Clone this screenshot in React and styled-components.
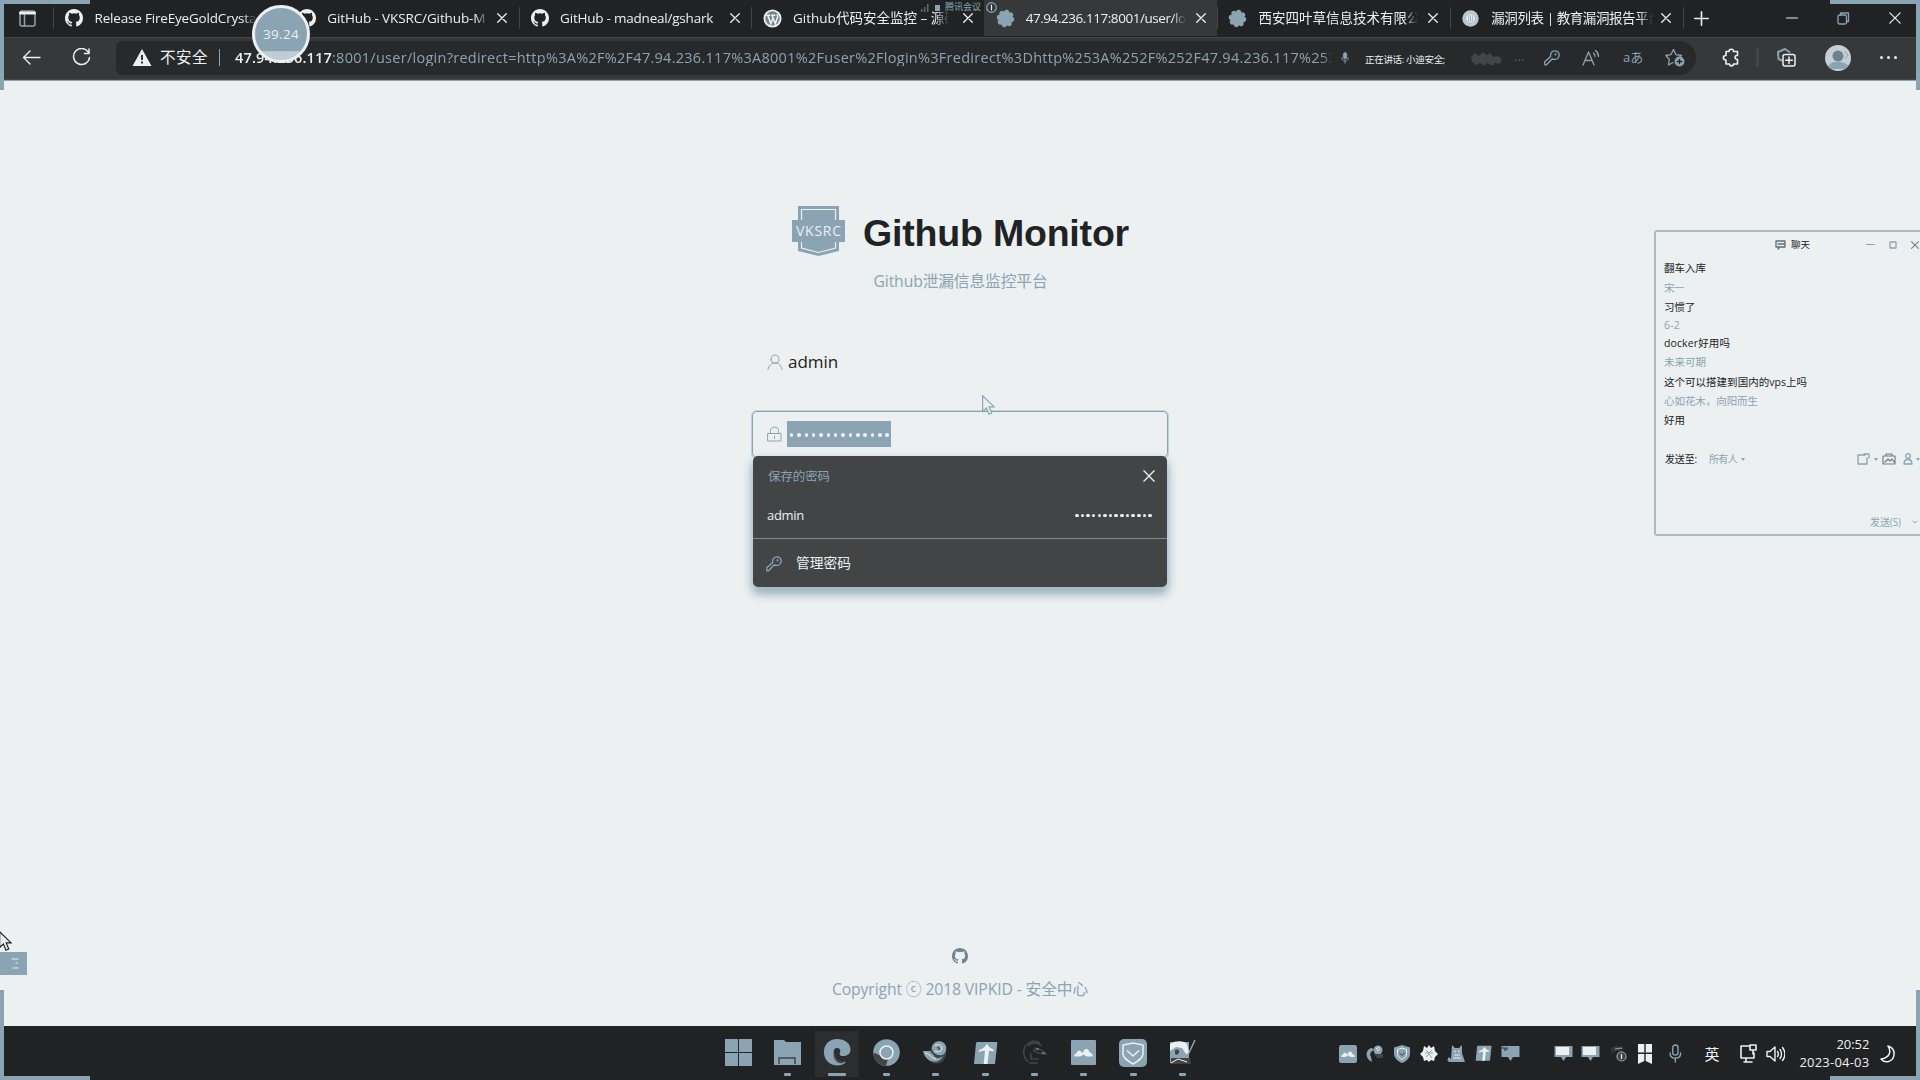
import React, { useLayoutEffect, useRef, useState } from 'react';
import styled, { createGlobalStyle, css } from 'styled-components';

const c = { light: '#ecf0f1', blue: '#8aa4b3', gray: '#424445', dark: '#202224' };

const Global = createGlobalStyle`
  * { box-sizing: border-box; }
  body { margin: 0; overflow: hidden; background: ${c.light}; }
  svg { display: block; flex: none; }
`;

const Screen = styled.div`
  position: relative;
  width: 1920px;
  height: 1080px;
  overflow: hidden;
  display: grid;
  grid-template-rows: 37px 43px 1fr 54px;
  background: ${c.light};
  color: ${c.light};
  font-family: 'Open Sans', 'Noto Sans CJK SC', sans-serif;
  font-size: 14px;
`;

/* ---------- text fitted to a column width ---------- */
const Line = styled.span`
  display: inline-block;
  flex: none;
  white-space: pre;
  width: ${p => p.$w}px;
  font-size: ${p => p.$size || 14}px;
  font-weight: ${p => p.$weight || 400};
  color: ${p => p.$color || c.light};
  line-height: ${p => p.$lh || 1.2};
`;
function Fit({ children, w, size, weight, color, lh, className }) {
  const ref = useRef(null);
  const [gap, setGap] = useState(0);
  useLayoutEffect(() => {
    const n = ref.current.textContent.length;
    setGap((w - ref.current.getBoundingClientRect().width) / n);
  }, [w]);
  return (
    <Line $w={w} $size={size} $weight={weight} $color={color} $lh={lh} className={className}>
      <span ref={ref} style={{ letterSpacing: gap + 'px' }}>{children}</span>
    </Line>
  );
}

/* ---------- tab strip ---------- */
const TabStrip = styled.header`
  display: flex;
  align-items: stretch;
  background: ${c.dark};
  padding-bottom: 1px;
`;
const TabMenu = styled.div`
  width: 53px;
  flex: none;
  display: flex;
  align-items: center;
  padding-left: 19px;
`;
const Tab = styled.div`
  width: 232.8px;
  flex: none;
  display: flex;
  align-items: center;
  padding-left: 11px;
  background: ${p => (p.$active ? '#36383a' : 'transparent')};
  &::before {
    content: '';
    flex: none;
    align-self: center;
    height: 22px;
    width: 1px;
    margin: 0 0 0 -11px;
    background: ${p => (p.$active ? 'transparent' : c.gray)};
  }
`;
const TabIcon = styled.div`
  margin-left: 10px;
  width: 20px;
  flex: none;
  display: flex;
  justify-content: center;
`;
const TabTitle = styled.div`
  margin-left: 10.5px;
  width: 170px;
  flex: none;
  overflow: hidden;
  display: flex;
  mask-image: linear-gradient(90deg, #000 ${p => p.$fade}px, transparent ${p => p.$fade + 14}px);
`;
const TabEnd = styled.div`
  width: 1px;
  height: 22px;
  align-self: center;
  background: ${c.gray};
`;
const WinButtons = styled.div`
  margin-left: auto;
  display: flex;
  align-items: center;
  gap: 39px;
  padding-right: 19px;
`;
const NewTab = styled.div`
  display: flex;
  align-items: center;
  padding-left: 10px;
`;

/* ---------- toolbar ---------- */
const Toolbar = styled.div`
  display: flex;
  align-items: center;
  background: #363839;
  border-top: 1px solid ${c.gray};
  border-bottom: 1px solid ${c.gray};
  padding-bottom: 2px;
`;
const NavButtons = styled.div`
  width: 116px;
  display: flex;
  align-items: center;
  gap: 31px;
  padding-left: 22px;
`;
const Address = styled.div`
  width: 1580px;
  height: 34px;
  border-radius: 6px 17px 17px 6px;
  background: #27292b;
  display: flex;
  align-items: center;
  padding-left: 16px;
`;
const Divider = styled.i`
  width: 1px;
  height: 17px;
  margin: 0 15px 0 11px;
  background: ${c.blue};
`;
const Url = styled.div`
  display: flex;
  width: 1096px;
  overflow: hidden;
  mask-image: linear-gradient(90deg, #000 1088px, transparent 1098px);
`;
const AddressTools = styled.div`
  display: flex;
  align-items: center;
  padding-left: 10px;
`;
const Speaking = styled.div`
  margin-left: 16px;
  width: 104px;
`;
const ToolGroup = styled.div`
  display: flex;
  align-items: center;
  margin-left: ${p => p.$ml || 0}px;
  gap: ${p => p.$gap || 0}px;
`;
const Avatar = styled.div`
  width: 26px;
  height: 26px;
  border-radius: 50%;
  background: #c4d0d7;
  display: grid;
  place-items: center;
  overflow: hidden;
`;

/* ---------- login page ---------- */
const Page = styled.main`
  display: flex;
  flex-direction: column;
  align-items: center;
  border-top: 1px solid ${c.blue};
`;
const Brand = styled.div`
  display: flex;
  align-items: center;
  height: 52px;
  margin: 124px 0 0 1px;
  gap: 18px;
`;
const Heading = styled.h1`
  margin: 4px 0 0;
  display: flex;
  font-family: 'Liberation Sans', sans-serif;
`;
const Subtitle = styled.div`
  height: 24px;
  margin: 12px 0 0 1px;
  display: flex;
  align-items: center;
`;
const Form = styled.form`
  width: 416px;
  margin: 46px 0 0;
`;
const Field = styled.div`
  height: 47px;
  display: flex;
  align-items: center;
  gap: 5px;
  padding: 0 0 1px 15px;
  border-radius: 5px;
  ${p => p.$focus && css`
    border: 1px solid ${c.blue};
    box-shadow: 0 0 0 1px #c4d0d7;
    padding-left: 14px;
  `}
`;
const Gap = styled.div`height: 25px;`;
const Selected = styled.div`
  width: 104px;
  height: 26px;
  padding: 2px 0 0 1px;
  display: flex;
  align-items: center;
  justify-content: space-around;
  background: ${c.blue};
`;
const Dot = styled.i`
  width: ${p => p.$s}px;
  height: ${p => p.$s}px;
  border-radius: 50%;
  background: ${c.light};
`;
const Popup = styled.section`
  height: 131px;
  margin: -2px 0 0 1px;
  width: 414px;
  border-radius: 5px;
  background: ${c.gray};
  box-shadow: 0 7px 8px #a3b8c4, 0 4px 12px #b2c3cc;
  position: relative;
`;
const PopHead = styled.div`
  height: 40px;
  padding: 0 12px 0 15px;
  display: flex;
  align-items: center;
  justify-content: space-between;
`;
const PopRow = styled(PopHead)`
  height: 43px;
  padding: 0 15px 3px 14px;
  border-bottom: 1px solid #778b97;
`;
const PopManage = styled(PopHead)`
  height: 48px;
  padding: 1px 12px 0 13px;
  justify-content: flex-start;
  gap: 14px;
`;
const SmallDots = styled.div`
  width: 77px;
  display: flex;
  justify-content: space-between;
`;
const Footer = styled.footer`
  margin-top: auto;
  height: 78px;
  display: flex;
  flex-direction: column;
  align-items: center;
  gap: 16px;
`;

/* ---------- taskbar ---------- */
const Taskbar = styled.footer`
  display: flex;
  align-items: center;
  background: ${c.dark};
  padding: 1px 0 0 713.5px;
`;
const TaskApp = styled.div`
  width: 49.4px;
  height: 46px;
  display: grid;
  grid-template-rows: 44px 3px;
  justify-items: center;
  align-items: center;
  &::after {
    content: '';
    width: ${p => (p.$active ? 18 : p.$run ? 7 : 0)}px;
    height: 3px;
    margin-top: -3px;
    border-radius: 1px;
    background: ${c.blue};
  }
  ${p => p.$active && css`background: linear-gradient(#2b2d2f, #2b2d2f) center / 44px 46px no-repeat;`}
`;
const Tray = styled.div`
  margin-left: 128px;
  display: flex;
  align-items: center;
`;
const TrayCell = styled.div`
  width: ${p => p.$w}px;
  padding-right: ${p => p.$after || 0}px;
  display: flex;
  justify-content: center;
`;
const Clock = styled.div`
  display: flex;
  flex-direction: column;
  align-items: flex-end;
  width: 85px;
`;

/* ---------- overlays ---------- */
const Corner = styled.div`
  position: absolute;
  width: 90px;
  height: 90px;
  pointer-events: none;
  border: 0 solid ${c.blue};
  ${p => p.$v}: 0;
  ${p => p.$h}: 0;
  border-${p => p.$v}-width: 4px;
  border-${p => p.$h}-width: 4px;
`;
const Timer = styled.div`
  position: absolute;
  left: 252px;
  top: 5px;
  width: 58px;
  height: 58px;
  border-radius: 50%;
  border: 3px solid ${c.light};
  background: linear-gradient(${c.blue} 82%, #c0cdd4 84%);
  display: grid;
  place-items: center;
`;
const Meeting = styled.div`
  position: absolute;
  left: 921px;
  top: 0;
  height: 15px;
  display: flex;
  align-items: center;
`;
const Pointer = styled.div`
  position: absolute;
  left: ${p => p.$x}px;
  top: ${p => p.$y}px;
`;
const SideBadge = styled.div`
  position: absolute;
  left: 0;
  top: 952px;
  width: 27px;
  height: 23px;
  background: ${c.blue};
  display: grid;
  place-items: center end;
  padding-right: 8px;
`;
const Chat = styled.aside`
  position: absolute;
  left: 1654px;
  top: 230px;
  width: 270px;
  height: 306px;
  border: 2px solid #a9bcc7;
  border-radius: 3px;
  background: ${c.light};
  display: flex;
  flex-direction: column;
`;
const ChatTitle = styled.div`
  height: 26px;
  display: flex;
  align-items: center;
  padding-left: 119px;
  gap: 5px;
`;
const ChatControls = styled.div`
  display: flex;
  align-items: center;
  gap: 14px;
  margin-left: 51px;
`;
const Messages = styled.div`
  padding-left: 8px;
  height: 194px;
`;
const Msg = styled.div`
  height: ${p => p.$h}px;
  display: flex;
  align-items: center;
`;
const SendTo = styled.div`
  display: flex;
  align-items: center;
  height: 30px;
  padding-left: 9px;
`;
const ChatIcons = styled.div`
  display: flex;
  align-items: center;
  gap: 4px;
  margin-left: 112px;
`;
const Send = styled.div`
  margin-top: 37px;
  padding-left: 214px;
  display: flex;
  align-items: center;
  height: 24px;
  gap: 11px;
`;

/* ---------- icons ---------- */
const I = ({ w, h, vb, s = 1.3, col = c.light, fill = 'none', children }) => (
  <svg width={w} height={h || w} viewBox={vb || `0 0 ${w} ${h || w}`} fill={fill}
    stroke={fill === 'none' ? col : 'none'} strokeWidth={s} strokeLinecap="round" strokeLinejoin="round">{children}</svg>
);
const Octocat = ({ s = 18, col = c.light }) => (
  <svg width={s} height={s} viewBox="0 0 16 16" fill={col}>
    <path d="M8 0C3.58 0 0 3.58 0 8c0 3.54 2.29 6.53 5.47 7.59.4.07.55-.17.55-.38 0-.19-.01-.82-.01-1.49-2.01.37-2.53-.49-2.69-.94-.09-.23-.48-.94-.82-1.13-.28-.15-.68-.52-.01-.53.63-.01 1.08.58 1.23.82.72 1.21 1.87.87 2.33.66.07-.52.28-.87.51-1.07-1.78-.2-3.64-.89-3.64-3.95 0-.87.31-1.59.82-2.15-.08-.2-.36-1.02.08-2.12 0 0 .67-.21 2.2.82a7.6 7.6 0 0 1 4 0c1.53-1.04 2.2-.82 2.2-.82.44 1.1.16 1.92.08 2.12.51.56.82 1.27.82 2.15 0 3.07-1.87 3.75-3.65 3.95.29.25.54.73.54 1.48 0 1.07-.01 1.93-.01 2.2 0 .21.15.46.55.38A8 8 0 0 0 16 8c0-4.42-3.58-8-8-8z" />
  </svg>
);
const Cross = ({ s = 9, col = c.light, w = 1.3 }) => <I w={s} vb="0 0 10 10" s={w} col={col}><path d="M.7.7 9.3 9.3M9.3.7.7 9.3" /></I>;
const WordPress = () => (
  <svg width="19" height="19" viewBox="0 0 20 20">
    <circle cx="10" cy="10" r="9.5" fill={c.light} />
    <circle cx="10" cy="10" r="7.6" fill="#71858f" />
    <path d="M3.5 6.5h4M8.5 6.5h4.5M5 6.5l3.3 9 2.2-6.3M9.5 6.5l3.4 9L15.5 8c.3-1-.8-1.8-.8-2.6" fill="none" stroke={c.light} strokeWidth="1.6" />
  </svg>
);
const Scallop = () => (
  <svg width="19" height="19" viewBox="0 0 20 20" fill={c.blue}>
    <circle cx="10" cy="10" r="7.6" />
    {[0, 45, 90, 135, 180, 225, 270, 315].map(a => <circle key={a} cx="10" cy="3.4" r="2.7" transform={`rotate(${a + 10} 10 10)`} />)}
  </svg>
);
const Seal = () => (
  <svg width="17" height="17" viewBox="0 0 18 18">
    <circle cx="9" cy="9" r="8.7" fill="#b9c9d2" />
    <circle cx="9" cy="9" r="5" fill={c.light} stroke={c.blue} strokeDasharray="1 1" />
    <path d="M7 5.5v7M9 5v8M11 5.5v7" stroke={c.blue} strokeWidth=".8" />
  </svg>
);
const KeyIcon = ({ s = 16, col = c.blue }) => <I w={s} vb="0 0 16 16" s={1.3} col={col}><path d="M8 9 2.600 14.800H.8v-3L6.600 6.500C6 3.300 8 .8 10.800.8c2.600 0 4.400 1.900 4.400 4.300 0 2.700-2.200 4.600-4.700 4.300z" /><circle cx="11.500" cy="4.400" r=".4" /></I>;
const Shield = ({ s }) => (
  <svg width={s} height={s} viewBox="0 0 18 18">
    <path d="M9 0l8 2.500v6c0 4-3 7.500-8 9.500C4 16 1 12.500 1 8.500v-6z" fill={c.blue} />
    <path d="M9 3l4.500 1.500v4c0 2.500-1.800 4.500-4.500 6-2.700-1.500-4.500-3.500-4.500-6v-4z" fill="none" stroke={c.light} />
    <path d="M6.500 8 9 10.500 11.500 7.500" fill="none" stroke={c.gray} />
  </svg>
);
const Mountain = ({ s }) => (
  <svg width={s} height={s} viewBox="0 0 24 24">
    <rect width="24" height="24" rx={s < 20 ? 3 : 1} fill={c.blue} />
    <path d="M3 15.500c0-1.500.8-2.500 2-2.500.6-1.700 1.700-3 2.700-3 1.300 0 2.300 1.300 3.300 2.800.8-2.200 2.200-4.100 3.700-4.100 1.800 0 3 1.800 3.300 3.600 1.800.2 3 1.400 3 3.200-2 .6-5 .6-7-.2l-2-1.500-2.500 1.700c-2 .6-4.500.6-6.500 0z" fill={c.light} />
  </svg>
);
const Arrow = ({ s }) => (
  <svg width={s} height={s * 0.96} viewBox="0 0 25 24">
    <path d="M4 1h19c1 0 1.500.5 1.300 1.500L22 23H1L3 2z" fill={c.blue} />
    <path d="M14 2.500c1 2.500 3 4.500 6.500 6v2c-1.500-.5-3-.7-4.500-.7L14.500 23h-3.800L12 9.800c-2 0-4 .3-6 1.200V9c3.500-1 6.500-3 8-6.500z" fill={c.light} />
  </svg>
);
const Screenlet = ({ col, inner }) => (
  <svg width="19" height="17" viewBox="0 0 19 17">
    <path d="M.5 1h18v11H12l-2.500 4L7 12H.5z" fill={c.blue} />
    <rect x="2" y="2" width="13" height="8" fill={col} />
    {inner && <path d="M1 3h3v3M6 2v3" stroke={c.dark} fill="none" />}
  </svg>
);
const Mic = ({ s = 18, col = c.blue }) => <I w={s * 0.67} h={s} vb="0 0 12 18" s={1.3} col={col}><rect x="3.500" y="1" width="5" height="9.500" rx="2.500" fill={s < 15 ? col : 'none'} /><path d="M1 8.500c0 3 2 5 5 5s5-2 5-5M6 13.500V17" /></I>;
const Cursor = ({ col, w = 13 }) => <svg width={w} height={w * 1.6} viewBox="0 0 13 21"><path d="M.6.8v15.800l3.800-3.500 2.600 6.300 2.800-1.200L7.200 12h5z" fill={c.light} stroke={col} strokeWidth="1.200" /></svg>;

const TABS = [
  { icon: <Octocat />, text: 'Release FireEyeGoldCrystal', w: 165, fade: 148 },
  { icon: <Octocat />, text: 'GitHub - VKSRC/Github-M', w: 158, fade: 148, close: true },
  { icon: <Octocat />, text: 'GitHub - madneal/gshark', w: 153, fade: 160, close: true },
  { icon: <WordPress />, text: 'Github代码安全监控 – 源码', w: 165, fade: 142, close: true },
  { icon: <Scallop />, text: '47.94.236.117:8001/user/lo', w: 160, fade: 146, close: true, active: true },
  { icon: <Scallop />, text: '西安四叶草信息技术有限公', w: 162, fade: 146, close: true },
  { icon: <Seal />, text: '漏洞列表 | 教育漏洞报告平台', w: 170, fade: 148, close: true },
];

const MESSAGES = [
  ['翻车入库', 42, 22, 1], ['宋一', 20, 18, 0], ['习惯了', 31, 20, 1], ['6-2', 16, 17, 0],
  ['docker好用吗', 66, 18, 1], ['未来可期', 42, 21, 0], ['这个可以搭建到国内的vps上吗', 143, 19, 1],
  ['心如花木，向阳而生', 94, 19, 0], ['好用', 21, 19, 1],
];

const APPS = [
  <svg key="w" width="27" height="27" viewBox="0 0 27 27" fill={c.blue}><path d="M0 0h13v13H0zM14 0h13v13H14zM0 14h13v13H0zM14 14h13v13H14z" /></svg>,
  <svg key="f" width="27" height="25" viewBox="0 0 27 25"><path d="M0 0h10l2 2h15v23H0z" fill={c.blue} /><path d="M5 24v-6h16v6" fill="none" stroke={c.gray} strokeWidth="1.500" /></svg>,
  <svg key="e" width="28" height="27" viewBox="0 0 28 27"><path d="M1 15C0 6 6 0 14 0c8 0 14 5 13.500 11-.3 4-3.500 6-7.500 6-3 0-4-1.500-3-3.500 1-2.500-.5-4.500-3-4.500-4 0-4 6-2 9.500 2 3.500 6 5 11 4.500C18.500 29 3 28 1 15z" fill={c.blue} /><path d="M12 14c0 5 4 9 10 8.500-3 3-8 2-10-2s-2-5 0-6.500z" fill={c.gray} /></svg>,
  <svg key="c" width="27" height="27" viewBox="0 0 27 27"><circle cx="13.500" cy="13.500" r="13.300" fill={c.blue} /><path d="M2 14l6 3 7 3-2 6.800C6 26.500 1 21 0 15z" fill={c.gray} /><circle cx="13.500" cy="13.500" r="6.500" fill={c.blue} stroke={c.light} strokeWidth="1.500" /></svg>,
  <svg key="b" width="25" height="24" viewBox="0 0 25 24"><path d="M0 10h7c2-7 8-10 13-7 5 3 4 14-1 18-6 4-15 1-19-11z" fill={c.gray} /><path d="M0 10h7l5 6c2 2 6 1 8-1-2 5-7 7-12 5S1 14 0 10zM9 5c2-5 8-6 12-3 4 4 2 11-2 12-5 1-11-2-10-9z" fill={c.blue} /><path d="M12 5c3-3 7-1 7 2s-4 5-7 3M2 12c4 0 6 5 11 6" fill="none" stroke={c.light} /><path d="M14 7c2-1 3 0 2 2" fill="none" stroke={c.dark} /></svg>,
  <Arrow key="a" s={25} />,
  <svg key="k" width="25" height="26" viewBox="0 0 25 26" fill="none" stroke={c.gray} strokeWidth="1.500"><path d="M18 3C11-1 3 3 2 10c-1 5 1 9 4 12M6 6c3-4 9-4 14 0M12 8l7 2 5 4-8-1-5-3M8 19h9M7 23h9M10 13c-2 2-2 3 0 5" /><path d="M14 9h3M20 13h3" stroke={c.blue} strokeWidth="1" /></svg>,
  <Mountain key="m" s={25} />,
  <svg key="s" width="28" height="28" viewBox="0 0 28 28"><rect width="28" height="28" rx="5" fill={c.blue} /><path d="M14 4l10 2v9c0 4-5 7-10 10C9 22 4 19 4 15V6z" fill="none" stroke={c.light} strokeWidth="1.500" /><path d="M8 11.500l6 5.500 6-5.500" fill="none" stroke={c.light} strokeWidth="1.500" /></svg>,
  <svg key="n" width="26" height="25" viewBox="0 0 26 25"><path d="M0 2h19v21H0z" fill={c.blue} /><path d="M0 4c7-4 14-3 17 0l2 9-3 1-4-6-6-1-6 4z" fill={c.light} /><path d="M1 18h19l1 6H1zM5 10c4-2 6 2 2 5l-2-1" fill={c.gray} /><path d="M1 23l7-4 9 3" stroke={c.light} fill="none" /><path d="M25 0l-8 17" stroke={c.blue} strokeWidth="1.500" /></svg>,
];

const TRAY = [
  [26, <Mountain s={18} />],
  [27, <svg width="18" height="18" viewBox="0 0 18 18"><path d="M6 3C0 4-1 11 3 15l3 2-1-5c-2-3 0-6 3-7z" fill={c.blue} /><circle cx="12" cy="5" r="4.500" fill={c.blue} /><path d="M10 4l3-2M11 6l3-2" stroke={c.light} /><path d="M8 9h9v4h-6z" fill={c.gray} /></svg>],
  [27, <Shield s={18} />],
  [27, <svg width="18" height="17" viewBox="0 0 18 17"><path d="M4 1l3 2 2-3 2 3 3-2 1 5 3 3-3 3-1 4-3-1-2 2-2-2-3 1-1-4-3-3 3-3z" fill={c.light} /><path d="M6 5l3 3 3-3M6 12l3-3 3 4M5 8h8" stroke={c.blue} fill="none" /></svg>],
  [28, <svg width="19" height="18" viewBox="0 0 19 18"><path d="M5 0l3 3h4l3-3v8l3 9H3C0 17 0 14 2 12l2 2z" fill={c.blue} /><path d="M7 6l2 1M11 7l2-1M7 10h6M6 13h8" stroke={c.light} /></svg>],
  [26, <Arrow s={17} />],
  [54, <Screenlet col={c.blue} inner />, 26],
  [27, <Screenlet col={c.light} />],
  [27, <Screenlet col={c.light} />],
  [28, <I w={17} h={17} s={1.200} col={c.blue}><path d="M1 5c3-4 8-4 11-1M2 7l6-3 4 3-5 3" stroke={c.gray} /><path d="M5 4l7-1" /><circle cx="11.500" cy="11.500" r="4.500" fill={c.gray} /><path d="M11.500 9.500v4" stroke={c.light} /></I>],
  [25, <svg width="14" height="20" viewBox="0 0 14 20" fill={c.light}><path d="M0 0h6.300v8.500H0zM7.700 0H14v8.500H7.700zM0 10h6.300v7L0 20zM7.700 10H14v10l-6.300-3z" /></svg>],
  [36, <Mic s={19} />],
  [37, <Fit w={15} size={15}>英</Fit>],
  [36, <I w={18} h={20} s={1.600}><path d="M10 2H2v12h13V9M5 18h8M7 14v4M11 1h6v5h-6zM14 6v4" /></I>],
  [18, <I w={19} h={18} s={1.400}><path d="M1 6.500h3L9 2v14l-5-4.500H1zM11.500 6.500c1 1.500 1 3.500 0 5M14 4.500c2 2.500 2 6.500 0 9M16.500 2.500c3 4 3 9 0 13" /></I>],
];

export default function App() {
  return (
    <Screen>
      <Global />
      <TabStrip>
        <TabMenu>
          <I w={17} h={17} s={1.500} col={c.blue}><rect x="1" y="1" width="15" height="15" rx="2" /><path d="M5.500 5v11" /><path d="M1.500 3h14" stroke={c.light} strokeWidth="3" /></I>
        </TabMenu>
        {TABS.map(t => (
          <Tab key={t.text} $active={t.active}>
            <TabIcon>{t.icon}</TabIcon>
            <TabTitle $fade={t.fade}><Fit w={t.w} size={13.500}>{t.text}</Fit></TabTitle>
            {t.close && <Cross s={10} />}
          </Tab>
        ))}
        <TabEnd />
        <NewTab><I w={15} s={1.600}><path d="M7.500.8v13.400M.8 7.500h13.400" /></I></NewTab>
        <WinButtons>
          <I w={12} s={1}><path d="M.5 6h11" /></I>
          <I w={13} s={1.300} col={c.blue}><rect x="1" y="3" width="8.500" height="9" rx="1.500" /><path d="M3.500 3V1h8v8.500h-2" /></I>
          <Cross s={12} w={1} />
        </WinButtons>
      </TabStrip>

      <Toolbar>
        <NavButtons>
          <I w={19} h={15} s={1.400}><path d="M18 7.500H1.500M8 1 1.500 7.500 8 14" /></I>
          <I w={19} h={19} s={1.500}><path d="M16.500 4.500A8 8 0 1 0 17.500 9.500M17 1v4.500h-4.500" /></I>
        </NavButtons>
        <Address>
          <svg width="20" height="17" viewBox="0 0 20 17"><path d="M10 0l9.500 17H.5z" fill={c.light} /><path d="M10 6v5M10 12.500v2" stroke={c.dark} strokeWidth="1.800" /></svg>
          <ToolGroup $ml={8}><Fit w={48} size={15.500}>不安全</Fit></ToolGroup>
          <Divider />
          <Url>
            <Fit w={97} size={14.500} weight={600}>47.94.236.117</Fit>
            <Fit w={1005} size={14.500} color={c.blue}>:8001/user/login?redirect=http%3A%2F%2F47.94.236.117%3A8001%2Fuser%2Flogin%3Fredirect%3Dhttp%253A%252F%252F47.94.236.117%253</Fit>
          </Url>
          <AddressTools>
            <Mic s={12} />
            <Speaking><Fit w={80} size={9.500}>正在讲话: 小迪安全;</Fit></Speaking>
            <I w={34} h={16} fill={c.gray}><path d="M3 12l-1-5 4-4 4 3 4-4 4 3 3-2 3 4 5-1 4 3-2 5-5-1-3 3-5-3-3 3-4-3-4 2z" /></I>
            <ToolGroup $ml={11}><Fit w={11} size={12} color="#5b6a73">...</Fit></ToolGroup>
            <ToolGroup $ml={19} $gap={22}>
              <KeyIcon s={16} />
              <I w={19} h={18} s={1.300} col={c.blue}><path d="M1 16 6.500 3 12 16M3 11.500h7M11.500 4c1 1 1.500 2 1.500 3.500M13.500 1.500c2 1.500 3 3.500 3 6" /></I>
              <Fit w={20} size={13} color={c.blue}>aあ</Fit>
              <I w={20} h={19} s={1.300} col={c.blue}><path d="M8 14.500 3.500 17l.8-5.500L.8 7.500l5-.8L8.500 1.500l2.500 5.200 5.500.8-2 2" /><circle cx="14.500" cy="13.500" r="4.300" fill={c.blue} /><path d="M12.300 13.500h4.400M14.500 11.300v4.400" stroke={c.dark} /></I>
            </ToolGroup>
          </AddressTools>
        </Address>
        <ToolGroup $ml={26}>
          <I w={18} h={19} s={1.600}><path d="M4 3.500h3c0-3 4.500-3 4.500 0h4v4c-3-.5-3.500 4 0 4v4.500h-4c0 2.500-4 2.500-4 0H4v-4c-3.500 0-3.500-4.500 0-4.500z" /></I>
        </ToolGroup>
        <ToolGroup $ml={16}><I w={3} h={19} s={3} col={c.gray}><path d="M1.500 1v17" /></I></ToolGroup>
        <ToolGroup $ml={18}>
          <I w={19} h={19} s={1.500}><path d="M5 12.500 1.500 11 1 4 8 1l4.500 3" stroke={c.blue} strokeWidth="2" /><rect x="6" y="6.500" width="12" height="11.500" rx="2" /><path d="M12 9v6.500M8.800 12.200h6.500" /></I>
        </ToolGroup>
        <ToolGroup $ml={29}><Avatar><svg width="26" height="26" viewBox="0 0 26 26"><path d="M3 24c1-7 5-7 10-7s10 1 12 7z" fill={c.blue} /><circle cx="13" cy="11" r="5.500" fill="#70828c" /><path d="M19 6l4 4-3 4" stroke={c.blue} fill="none" /></svg></Avatar></ToolGroup>
        <ToolGroup $ml={29} $gap={4}><Dot $s={3} /><Dot $s={3} /><Dot $s={3} /></ToolGroup>
      </Toolbar>

      <Page>
        <Brand>
          <svg width="53" height="50" viewBox="0 0 53 50">
            <path d="M6 0h41v14h6v22h-6v9L26.500 50 6 45v-9H0V14h6z" fill={c.blue} />
            <path d="M9.500 14V3.500h34V14M9.500 36v6l17 4.500 17-4.500v-6" fill="none" stroke={c.light} strokeWidth="1.200" />
            <text x="26.500" y="29.500" textAnchor="middle" textLength="45" fontFamily="Open Sans, sans-serif" fontSize="14" fill={c.light}>VKSRC</text>
          </svg>
          <Heading><Fit w={266} size={37.500} weight={700} color={c.dark}>Github Monitor</Fit></Heading>
        </Brand>
        <Subtitle><Fit w={174} size={15.750} color={c.blue}>Github泄漏信息监控平台</Fit></Subtitle>
        <Form>
          <Field>
            <I w={16} h={16} s={1} col={c.blue}><path d="M4 5.500C4 2.500 5.500 1 8 1s4 1.500 4 4.500S10.500 9 8 9 4 8 4 5.500zM1 15.500C2 11.500 4 9 8 9s6 2.500 7 6.500" /></I>
            <Fit w={50} size={17} color={c.dark}>admin</Fit>
          </Field>
          <Gap />
          <Field $focus>
            <I w={15} h={16} s={1} col={c.blue}><path d="M1 7.500h13v7.500H1zM3.500 7V4.500c0-4.500 8-4.500 8 0V7M7.500 10v2.500" /></I>
            <Selected>{Array.from({ length: 14 }, (_, i) => <Dot key={i} $s={3.500} />)}</Selected>
          </Field>
          <Popup>
            <PopHead><Fit w={62} size={12.500} color={c.blue}>保存的密码</Fit><Cross s={12} w={1.100} /></PopHead>
            <PopRow><Fit w={37} size={13}>admin</Fit><SmallDots>{Array.from({ length: 14 }, (_, i) => <Dot key={i} $s={3.500} />)}</SmallDots></PopRow>
            <PopManage><KeyIcon s={16} /><Fit w={55} size={13.700}>管理密码</Fit></PopManage>
          </Popup>
        </Form>
        <Footer>
          <Octocat s={16} col="#71858f" />
          <Fit w={256} size={15.750} color={c.blue}>Copyright ⓒ 2018 VIPKID - 安全中心</Fit>
        </Footer>
      </Page>

      <Taskbar>
        {APPS.map((a, i) => <TaskApp key={i} $active={i === 2} $run={i > 0}>{a}</TaskApp>)}
        <Tray>
          {TRAY.map(([w, el, after], i) => <TrayCell key={i} $w={w} $after={after}>{el}</TrayCell>)}
          <Clock><Fit w={33} size={13} lh={1.350}>20:52</Fit><Fit w={70} size={13} lh={1.350}>2023-04-03</Fit></Clock>
          <TrayCell $w={36}><I w={16} h={18} s={1.500}><path d="M9 1c4 6 1 12-7 13 4 5 12 3 13-4C15.500 5 13 2 9 1z" /></I></TrayCell>
        </Tray>
      </Taskbar>

      <Chat>
        <ChatTitle>
          <I w={11} h={10} s={1.300} col="#5d6f79"><path d="M1 1h9v6H1zM3 4h6M3 9l2-2" /></I>
          <Fit w={19} size={9.500} color={c.dark}>聊天</Fit>
          <ChatControls>
            <I w={9} s={1} col={c.blue}><path d="M0 4.500h9" /></I>
            <I w={8} s={1.300} col={c.blue}><path d="M1 1h6v6H1z" /></I>
            <Cross s={8} col="#6d808b" />
          </ChatControls>
        </ChatTitle>
        <Messages>
          {MESSAGES.map(([t, w, h, own]) => <Msg key={t} $h={h}><Fit w={w} size={10.500} color={own ? c.dark : c.blue}>{t}</Fit></Msg>)}
        </Messages>
        <SendTo>
          <Fit w={32} size={10} color={c.dark}>发送至:</Fit>
          <ToolGroup $ml={12} $gap={4}><Fit w={28} size={10} color={c.blue}>所有人</Fit><I w={4} h={3} fill={c.blue}><path d="M0 0h4L2 3z" /></I></ToolGroup>
          <ChatIcons>
            <I w={13} h={12} s={1.300} col={c.blue}><path d="M8 2H1v9h9V5M7 1h5v4" /></I><I w={4} h={3} fill={c.blue}><path d="M0 0h4L2 3z" /></I>
            <I w={14} h={12} s={1.200} col="#6d808b"><path d="M1 3h12v8H1zM4 3V1h6v2M3 9l3-3 2 2 2-2 2 3" /></I>
            <ToolGroup $ml={3} $gap={3}><I w={10} h={12} s={1.300} col={c.blue}><circle cx="5" cy="3" r="2.300" /><path d="M1 11c0-6 8-6 8 0z" /></I><I w={4} h={3} fill={c.blue}><path d="M0 0h4L2 3z" /></I></ToolGroup>
          </ChatIcons>
        </SendTo>
        <Send><Fit w={31} size={10} color={c.blue}>发送(S)</Fit><I w={6} h={4} s={1} col={c.blue}><path d="M1 1l2 2 2-2" /></I></Send>
      </Chat>

      <Timer><Fit w={36} size={13.500}>39.24</Fit></Timer>
      <Meeting>
        <I w={8} h={9} fill="#5b6a73"><path d="M0 6h1.500v3H0zM3 4h1.500v5H3zM6 1h1.500v8H6z" /></I>
        <ToolGroup $ml={6} $gap={5}>
          <I w={5} h={6} fill={c.blue}><path d="M0 0h5v6H0z" /></I>
          <Fit w={36} size={9} color={c.blue}>腾讯会议</Fit>
          <I w={11} s={1.200} col={c.blue}><circle cx="5.500" cy="5.500" r="4.800" /><path d="M5.500 3v5" stroke={c.light} /></I>
        </ToolGroup>
      </Meeting>
      <Pointer $x={982} $y={395}><Cursor col={c.blue} w={13} /></Pointer>
      <Pointer $x={-1} $y={931}><Cursor col={c.dark} w={13} /></Pointer>
      <SideBadge><I w={8} h={11} s={1} col={c.light}><path d="M1 1h6M5 5h1.500M2 10h5" /></I></SideBadge>
      <Corner $v="top" $h="left" /><Corner $v="top" $h="right" />
      <Corner $v="bottom" $h="left" /><Corner $v="bottom" $h="right" />
    </Screen>
  );
}
